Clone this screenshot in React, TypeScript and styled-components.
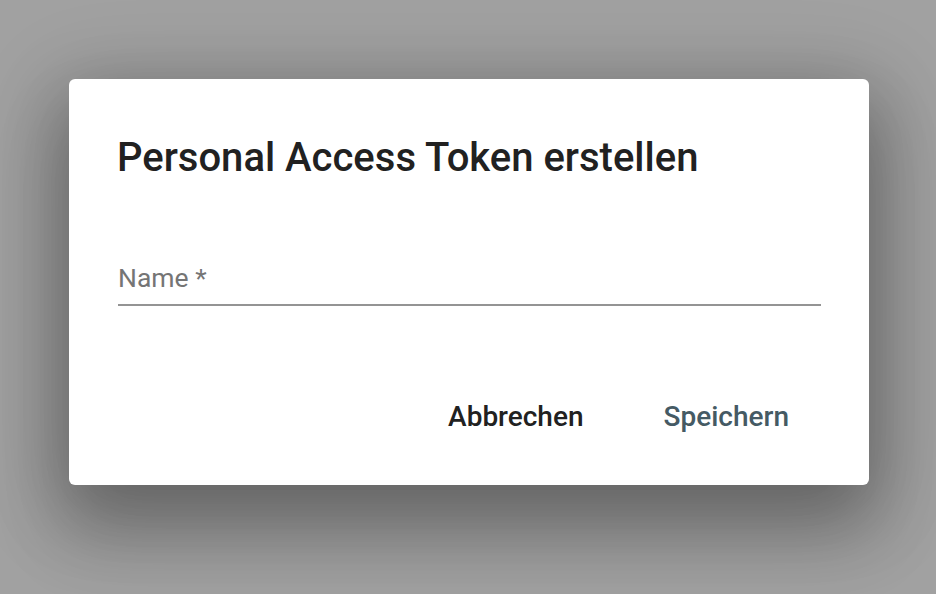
import React, { useState } from 'react';
import styled, { createGlobalStyle } from 'styled-components';

const GlobalStyle = createGlobalStyle`
  html, body {
    margin: 0;
    padding: 0;
    height: 100%;
  }
  body {
    font-family: Roboto, "Liberation Sans", Arial, sans-serif;
    -webkit-font-smoothing: antialiased;
  }
  #root {
    height: 100%;
  }
`;

const Backdrop = styled.div`
  height: 100vh;
  box-sizing: border-box;
  background: #a1a1a1;
  display: flex;
  align-items: center;
  justify-content: center;
  padding: 0 0 30px 2px;
`;

const Paper = styled.div`
  width: 800px;
  height: 406px;
  box-sizing: border-box;
  background: #fff;
  border-radius: 6px;
  box-shadow: 0px 22px 70px 8px rgba(0, 0, 0, 0.2),
    0px 48px 76px 6px rgba(0, 0, 0, 0.14), 0px 18px 92px 16px rgba(0, 0, 0, 0.12);
  display: flex;
  flex-direction: column;
  padding: 0 48px 0 49px;
`;

const Title = styled.h2`
  margin: 0 0 0 -1px;
  padding-top: 55px;
  font-size: 40px;
  font-weight: 500;
  line-height: 48px;
  color: #212121;
`;

const Field = styled.label`
  display: block;
  margin-top: 80px;
  border-bottom: 2px solid #949494;
  padding-bottom: 10px;
`;

const NameInput = styled.input`
  display: block;
  border: none;
  outline: none;
  width: 100%;
  padding: 0;
  font-family: inherit;
  font-size: 26.5px;
  line-height: 32px;
  height: 32px;
  color: #212121;
  background: transparent;

  &::placeholder {
    color: #757575;
    opacity: 1;
  }
`;

const Actions = styled.div`
  margin-top: auto;
  margin-bottom: 42px;
  display: flex;
  justify-content: flex-end;
  gap: 48px;
  padding-right: 16px;
`;

const TextButton = styled.button<{ $primary?: boolean }>`
  border: none;
  background: none;
  padding: 8px 16px;
  font-family: inherit;
  font-size: 28px;
  font-weight: 500;
  line-height: 36px;
  color: ${(p) => (p.$primary ? '#455a64' : '#212121')};
  cursor: pointer;
`;

export default function App() {
  const [name, setName] = useState('');

  return (
    <>
      <GlobalStyle />
      <Backdrop>
        <Paper role="dialog">
          <Title>Personal Access Token erstellen</Title>
          <Field>
            <NameInput
              placeholder="Name *"
              value={name}
              onChange={(e) => setName(e.target.value)}
            />
          </Field>
          <Actions>
            <TextButton>Abbrechen</TextButton>
            <TextButton $primary>Speichern</TextButton>
          </Actions>
        </Paper>
      </Backdrop>
    </>
  );
}
